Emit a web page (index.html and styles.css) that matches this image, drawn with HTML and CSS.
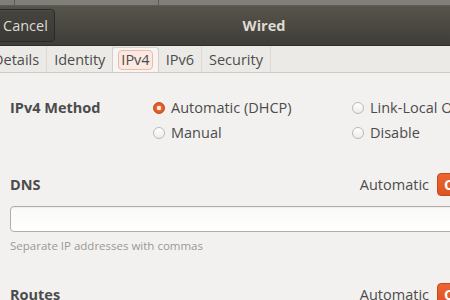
FILE: index.html
```html
<!DOCTYPE html>
<html>
<head>
<meta charset="utf-8">
<link rel="stylesheet" href="styles.css">
</head>
<body>
<div class="window">
  <div class="topstrip"><span class="tick t1"></span><span class="tick t2"></span></div>
  <header class="headerbar">
    <button class="cancel">Cancel</button>
    <div class="title">Wired</div>
  </header>
  <nav class="tabs">
    <div class="tab">Details</div>
    <div class="tab">Identity</div>
    <div class="tab active"><span class="focus">IPv4</span></div>
    <div class="tab">IPv6</div>
    <div class="tab">Security</div>
  </nav>
  <main class="content">
    <section class="method">
      <div class="label">IPv4 Method</div>
      <div class="radios">
        <label class="radio"><span class="dot checked"></span>Automatic (DHCP)</label>
        <label class="radio"><span class="dot"></span>Link-Local Only</label>
        <label class="radio"><span class="dot"></span>Manual</label>
        <label class="radio"><span class="dot"></span>Disable</label>
      </div>
    </section>
    <section class="block dns">
      <div class="row">
        <div class="label">DNS</div>
        <div class="auto">Automatic<span class="switch">ON</span></div>
      </div>
      <div class="entry"></div>
      <div class="hint">Separate IP addresses with commas</div>
    </section>
    <section class="block routes">
      <div class="row">
        <div class="label">Routes</div>
        <div class="auto">Automatic<span class="switch">ON</span></div>
      </div>
    </section>
  </main>
</div>
</body>
</html>
```
FILE: styles.css
```css
* { box-sizing: border-box; }
html, body { margin: 0; padding: 0; }
body {
  width: 450px;
  height: 300px;
  overflow: hidden;
  background: #f2f1f0;
  font-family: "Open Sans", "DejaVu Sans", sans-serif;
  font-size: 14.5px;
  color: #4c4c4c;
}
.window { width: 450px; height: 300px; overflow: hidden; }
.topstrip {
  height: 6px;
  background: #807e79;
  position: relative;
  border-bottom: 1px solid #5e5c57;
}
.tick { position: absolute; top: 0; width: 1px; height: 6px; background: #5d5b56; }
.t1 { left: 14px; }
.t2 { left: 158px; }
.headerbar {
  height: 40px;
  background: linear-gradient(#57544b, #3e3d39);
  display: flex;
  align-items: center;
  position: relative;
  border-bottom: 1px solid #2f2e2b;
}
.cancel {
  margin-left: -10px;
  height: 33px;
  width: 65px;
  padding: 0 0 0 12px;
  border: 1px solid #2a2926;
  border-radius: 4px;
  background: linear-gradient(#46443f, #3a3935);
  color: #dfdbd2;
  font-family: inherit;
  font-size: 14.5px;
  text-align: left;
  box-shadow: inset 0 1px 0 rgba(255,255,255,0.06);
}
.title {
  position: absolute;
  left: 0; right: 0;
  top: 0; bottom: 0;
  display: flex;
  align-items: center;
  justify-content: center;
  padding-left: 78px;
  font-weight: bold;
  color: #dfdbd2;
  pointer-events: none;
}
.tabs {
  display: flex;
  height: 27px;
  margin-left: -14px;
  border-bottom: 1px solid #cfcac5;
  background: #eceae7;
}
.tab {
  display: flex;
  align-items: center;
  padding: 0 7px;
  border-right: 1px solid #dcd8d3;
  color: #4c4c4c;
  white-space: nowrap;
}
.tab.active {
  background: #f6f5f4;
  border: 1px solid #d4cfca;
  border-bottom: none;
  border-radius: 3px 3px 0 0;
  padding: 0 5px;
  margin-left: -1px;
  margin-top: 1px;
}
.focus {
  border: 1px solid #f0b9a4;
  background: #fbe9e2;
  border-radius: 4px;
  padding: 0 2px;
  line-height: 18px;
}
.content { padding: 0 0 0 10px; }
.label { font-weight: bold; color: #4c4c4c; }
.method {
  display: flex;
  padding-top: 26px;
}
.method .label { width: 143px; flex: none; line-height: 18px; }
.radios {
  display: grid;
  grid-template-columns: 199px 120px;
  row-gap: 7px;
}
.radio {
  display: flex;
  align-items: center;
  line-height: 18px;
  white-space: nowrap;
}
.dot {
  width: 12px; height: 12px;
  border-radius: 50%;
  border: 1px solid #bdb8b2;
  background: linear-gradient(#ffffff, #eeecea);
  margin-right: 6px;
  flex: none;
}
.dot.checked {
  border-color: #c4491a;
  background: radial-gradient(circle, #fde5d8 0 2px, #e5622f 2.6px, #d9501d 100%);
}
.dns { padding-top: 31px; }
.row {
  display: flex;
  align-items: center;
  justify-content: space-between;
  height: 23px;
}
.auto {
  display: flex;
  align-items: center;
  color: #4c4c4c;
  margin-right: -37px;
}
.switch {
  margin-left: 8px;
  width: 50px;
  height: 23px;
  border-radius: 4px;
  background: linear-gradient(#ec6431, #dd5420);
  border: 1px solid #c14b1b;
  color: #fff;
  font-weight: bold;
  padding-left: 6px;
  line-height: 21px;
}
.entry {
  margin-top: 10px;
  height: 26px;
  margin-right: -10px;
  border: 1px solid #b3ada7;
  border-radius: 4px;
  background: linear-gradient(#f9f9f8, #ffffff);
  box-shadow: inset 0 1px 1px rgba(0,0,0,0.05);
}
.hint {
  margin-top: 6px;
  font-size: 11.5px;
  color: #9c9893;
}
.routes { padding-top: 30px; }
```
